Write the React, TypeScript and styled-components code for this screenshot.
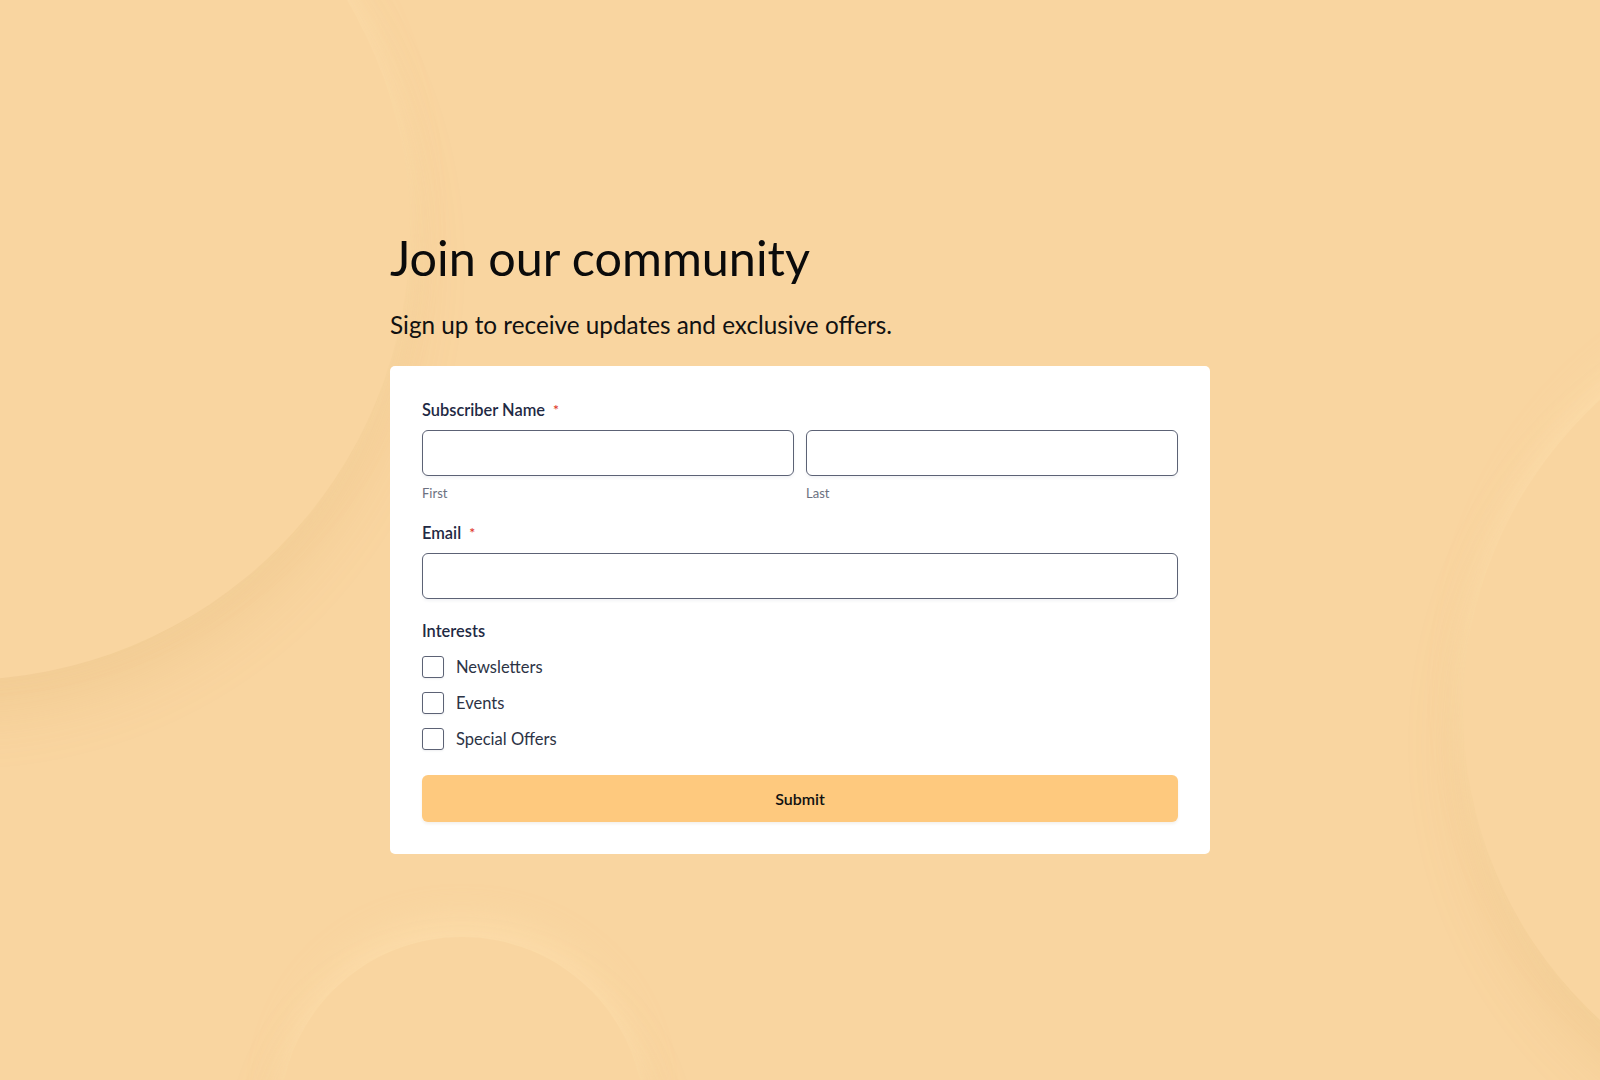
import React from 'react';
import styled, { createGlobalStyle } from 'styled-components';

const GlobalStyle = createGlobalStyle`
  html, body {
    margin: 0;
    padding: 0;
  }
  body {
    background: #f9d5a0;
    font-family: Lato, "Open Sans", sans-serif;
    color: #1f2a44;
  }
  * {
    box-sizing: border-box;
  }
`;

const interests = ['Newsletters', 'Events', 'Special Offers'];

const App: React.FC = () => {
  return (
    <Page>
      <GlobalStyle />
      <Blob size={900} left={-490} top={-220} />
      <Blob size={838} left={1463} top={291} />
      <Blob size={364} left={280} top={937} />

      <Content>
        <Title>Join our community</Title>
        <Subtitle>Sign up to receive updates and exclusive offers.</Subtitle>

        <Card>
          <Field>
            <Label>
              Subscriber Name <Required>*</Required>
            </Label>
            <NameRow>
              <SubField>
                <Input type="text" />
                <SubLabel>First</SubLabel>
              </SubField>
              <SubField>
                <Input type="text" />
                <SubLabel>Last</SubLabel>
              </SubField>
            </NameRow>
          </Field>

          <Field>
            <Label>
              Email <Required>*</Required>
            </Label>
            <Input type="email" />
          </Field>

          <Field>
            <Label>Interests</Label>
            <CheckList>
              {interests.map((item) => (
                <CheckRow key={item}>
                  <Box type="checkbox" />
                  <span>{item}</span>
                </CheckRow>
              ))}
            </CheckList>
          </Field>

          <SubmitButton type="button">Submit</SubmitButton>
        </Card>
      </Content>
    </Page>
  );
};

export default App;


const Page = styled.div`
  position: relative;
  min-height: 100vh;
  overflow: hidden;
  display: flex;
  align-items: center;
  justify-content: center;
`;

const Blob = styled.div<{ size: number; left: number; top: number }>`
  position: absolute;
  width: ${(p) => p.size}px;
  height: ${(p) => p.size}px;
  left: ${(p) => p.left}px;
  top: ${(p) => p.top}px;
  border-radius: 50%;
  background: #f9d5a0;
  box-shadow:
    0 -18px 30px rgba(255, 226, 176, 0.55),
    0 34px 60px rgba(214, 160, 90, 0.16);
  pointer-events: none;
`;

const Content = styled.div`
  position: relative;
  width: 820px;
  display: flex;
  flex-direction: column;
`;

const Title = styled.h1`
  margin: 0;
  font-size: 48.5px;
  line-height: 61px;
  font-weight: 400;
  color: #0b0b0b;
`;

const Subtitle = styled.p`
  margin: 21px 0 25px;
  font-size: 24.3px;
  line-height: 32px;
  color: #111111;
`;

const Card = styled.form`
  background: #ffffff;
  border-radius: 5px;
  padding: 32px;
  display: flex;
  flex-direction: column;
  gap: 20px;
`;

const Field = styled.div`
  display: flex;
  flex-direction: column;
`;

const Label = styled.label`
  font-size: 16.4px;
  line-height: 24px;
  font-weight: 600;
  color: #1f2a44;
  margin-bottom: 8px;
`;

const Required = styled.span`
  color: #e0392c;
  font-size: 14px;
  font-weight: 600;
  margin-left: 4px;
  vertical-align: 1px;
`;

const NameRow = styled.div`
  display: grid;
  grid-template-columns: 1fr 1fr;
  gap: 12px;
`;

const SubField = styled.div`
  display: flex;
  flex-direction: column;
`;

const Input = styled.input`
  height: 46px;
  width: 100%;
  border: 1px solid #5c6275;
  border-radius: 6px;
  background: #ffffff;
  box-shadow: 0 2px 3px rgba(40, 50, 80, 0.06);
  font-family: inherit;
  font-size: 16px;
  padding: 0 12px;
  outline: none;
`;

const SubLabel = styled.span`
  margin-top: 9px;
  font-size: 13px;
  line-height: 16px;
  color: #6b7080;
`;

const CheckList = styled.div`
  display: flex;
  flex-direction: column;
  gap: 12px;
  margin-top: 4px;
`;

const CheckRow = styled.label`
  display: flex;
  align-items: center;
  gap: 12px;
  font-size: 16.5px;
  line-height: 24px;
  color: #2c3345;
`;

const Box = styled.input`
  appearance: none;
  margin: 0;
  width: 22px;
  height: 22px;
  border: 1px solid #5c6275;
  border-radius: 3px;
  background: #ffffff;
  box-shadow: 0 1px 2px rgba(40, 50, 80, 0.08);
`;

const SubmitButton = styled.button`
  margin-top: 4px;
  height: 47px;
  border: none;
  border-radius: 6px;
  background: #fec97e;
  box-shadow: 0 2px 3px rgba(120, 80, 20, 0.08);
  font-family: inherit;
  font-size: 16px;
  font-weight: 600;
  color: #111111;
  cursor: pointer;
`;
